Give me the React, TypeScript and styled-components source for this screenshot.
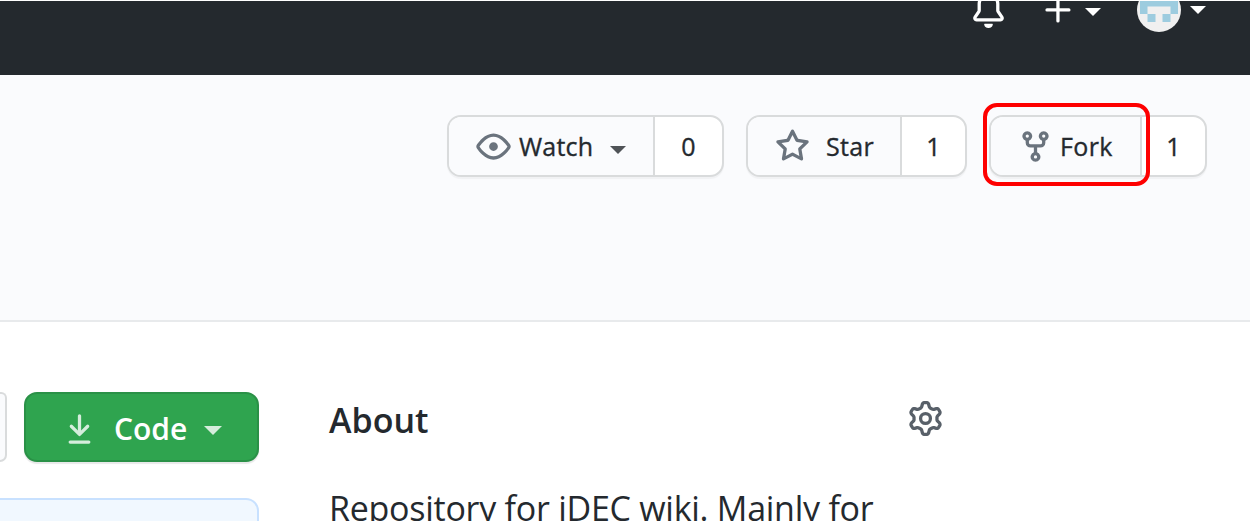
import React from "react";
import styled, { createGlobalStyle } from "styled-components";

const GlobalStyle = createGlobalStyle`
  * { box-sizing: border-box; }
  html, body { margin: 0; padding: 0; background: #fff; overflow: hidden; }
  body { font-family: "Open Sans", "Noto Sans", sans-serif; color: #24292e; }
`;

const Page = styled.div`
  width: 1250px;
  height: 521px;
  padding-top: 1px;
  overflow: hidden;
  background: #fff;
  display: flex;
  flex-direction: column;
`;

const Header = styled.header`
  height: 74px;
  flex: none;
  overflow: hidden;
  background: #24292e;
  color: #fff;
`;

const HeaderTools = styled.div`
  display: flex;
  justify-content: flex-end;
  align-items: center;
  height: 44px;
  margin-top: -13px;
  padding-right: 44px;
`;

const HeaderItem = styled.div<{ $gap: number }>`
  display: flex;
  align-items: center;
  margin-left: ${(p) => p.$gap}px;
`;

const Icon = styled.svg<{ $size?: number }>`
  display: block;
  flex: none;
  width: ${(p) => p.$size ?? 35}px;
  height: ${(p) => p.$size ?? 35}px;
  fill: currentColor;
`;

const Caret = styled.span<{ $gap: number; $half?: number; $drop?: number }>`
  flex: none;
  margin-left: ${(p) => p.$gap}px;
  margin-top: ${(p) => p.$drop ?? 0}px;
  border: ${(p) => p.$half ?? 8}px solid transparent;
  border-top: ${(p) => p.$half ?? 8}px solid currentColor;
  border-bottom: 0;
`;

const Avatar = styled.svg`
  display: block;
  width: 44px;
  height: 44px;
  border-radius: 50%;
`;

const RepoHead = styled.section`
  height: 247px;
  flex: none;
  background: #fafbfd;
  border-bottom: 2px solid #e8eaec;
  padding: 40px 43px 0 0;
  display: flex;
  justify-content: flex-end;
  align-items: flex-start;
  gap: 22px;
`;

const ButtonGroup = styled.div`
  position: relative;
  display: flex;
  height: 62px;
  border: 2px solid #d9dbdc;
  border-radius: 14px;
  background: #fff;
  box-shadow: 0 2px 1px rgba(27, 31, 35, 0.04);
`;

const Action = styled.button<{ $width: number; $pad: number }>`
  display: flex;
  align-items: center;
  width: ${(p) => p.$width}px;
  padding: 0 0 0 ${(p) => p.$pad}px;
  border: 0;
  border-right: 2px solid #d9dbdc;
  border-radius: 12px 0 0 12px;
  background: #fafbfd;
  color: #6a737d;
  font-family: inherit;
`;

const Label = styled.span<{ $gap: number; $spacing?: number }>`
  margin-left: ${(p) => p.$gap}px;
  font-size: 25px;
  font-weight: 500;
  -webkit-text-stroke: 0.35px currentColor;
  letter-spacing: ${(p) => p.$spacing ?? 0}px;
  line-height: 58px;
  color: #24292e;
`;

const DarkCaret = styled(Caret)`
  color: #4f5357;
`;

const Count = styled.span<{ $width: number }>`
  width: ${(p) => p.$width}px;
  text-align: center;
  font-size: 25px;
  font-weight: 500;
  -webkit-text-stroke: 0.35px currentColor;
  line-height: 58px;
`;

const Highlight = styled.span`
  position: absolute;
  left: -8px;
  top: -14px;
  width: 167px;
  height: 83px;
  border: 4px solid #fe0000;
  border-radius: 14px;
`;

const Content = styled.main`
  flex: 1;
  min-height: 0;
  display: flex;
`;

const FileColumn = styled.div`
  width: 259px;
  flex: none;
  padding-top: 70px;
`;

const FileNav = styled.div`
  display: flex;
  gap: 17px;
`;

const AddFile = styled.div`
  width: 7px;
  height: 70px;
  border: 2px solid #d9dbdc;
  border-left: 0;
  border-radius: 0 10px 12px 0;
  background: #fafbfd;
`;

const CodeButton = styled.button`
  display: flex;
  align-items: center;
  width: 235px;
  height: 70px;
  padding: 4px 0 0 36px;
  border: 2px solid #2a9147;
  border-radius: 13px;
  background: #2fa44f;
  box-shadow: 0 2px 1px rgba(27, 31, 35, 0.1);
  color: #d5eddc;
  font-family: inherit;
`;

const CodeLabel = styled.span`
  margin-left: 17px;
  font-size: 30px;
  font-weight: 600;
  line-height: 58px;
  color: #fff;
`;

const CommitBox = styled.div`
  height: 60px;
  margin-top: 36px;
  border: 2px solid #c8e1ff;
  border-left: 0;
  border-radius: 0 13px 0 0;
  background: #f1f8ff;
`;

const About = styled.aside`
  width: 614px;
  margin-left: 70px;
  padding-top: 72px;
`;

const AboutHead = styled.div`
  display: flex;
  align-items: center;
  justify-content: space-between;
  height: 48px;
  color: #586069;
`;

const AboutTitle = styled.h2`
  margin: 0;
  padding-top: 4px;
  font-size: 34px;
  font-weight: 600;
  line-height: 48px;
  color: #24292e;
`;

const Description = styled.p`
  margin: 42px 0 0;
  font-size: 34px;
  line-height: 48px;
  white-space: nowrap;
  letter-spacing: -0.26px;
`;

const paths = {
  bell: "M8 16a2 2 0 001.985-1.75c.017-.137-.097-.25-.235-.25h-3.5c-.138 0-.252.113-.235.25A2 2 0 008 16zM8 1.5A3.5 3.5 0 004.5 5v2.947c0 .346-.102.683-.294.97l-1.703 2.556a.018.018 0 00-.003.01l.001.006c0 .002.002.004.004.006a.017.017 0 00.006.004l.007.001h10.964l.007-.001a.016.016 0 00.006-.004.016.016 0 00.004-.006l.001-.007a.017.017 0 00-.003-.01l-1.703-2.554a1.75 1.75 0 01-.294-.97V5A3.5 3.5 0 008 1.5zM3 5a5 5 0 0110 0v2.947c0 .05.015.098.042.139l1.703 2.555A1.518 1.518 0 0113.482 13H2.518a1.518 1.518 0 01-1.263-2.36l1.703-2.554A.25.25 0 003 7.947V5z",
  plus: "M7.75 2a.75.75 0 01.75.75V7h4.25a.75.75 0 110 1.5H8.5v4.25a.75.75 0 11-1.5 0V8.5H2.75a.75.75 0 010-1.5H7V2.75A.75.75 0 017.75 2z",
  eye: "M1.679 7.932c.412-.621 1.242-1.75 2.366-2.717C5.175 4.242 6.527 3.5 8 3.5c1.473 0 2.824.742 3.955 1.715 1.124.967 1.954 2.096 2.366 2.717a.119.119 0 010 .136c-.412.621-1.242 1.75-2.366 2.717C10.825 11.758 9.473 12.5 8 12.5c-1.473 0-2.824-.742-3.955-1.715C2.92 9.818 2.09 8.69 1.679 8.068a.119.119 0 010-.136zM8 2c-1.981 0-3.67.992-4.933 2.078C1.797 5.169.88 6.423.43 7.1a1.619 1.619 0 000 1.798c.45.678 1.367 1.932 2.637 3.024C4.329 13.008 6.019 14 8 14c1.981 0 3.67-.992 4.933-2.078 1.27-1.091 2.187-2.345 2.637-3.023a1.619 1.619 0 000-1.798c-.45-.678-1.367-1.932-2.637-3.023C11.671 2.992 9.981 2 8 2zm0 8a2 2 0 100-4 2 2 0 000 4z",
  star: "M8 .25a.75.75 0 01.673.418l1.882 3.815 4.21.612a.75.75 0 01.416 1.279l-3.046 2.97.719 4.192a.75.75 0 01-1.088.791L8 12.347l-3.766 1.98a.75.75 0 01-1.088-.79l.72-4.194L.818 6.374a.75.75 0 01.416-1.28l4.21-.611L7.327.668A.75.75 0 018 .25zm0 2.445L6.615 5.5a.75.75 0 01-.564.41l-3.097.45 2.24 2.184a.75.75 0 01.216.664l-.528 3.084 2.769-1.456a.75.75 0 01.698 0l2.77 1.456-.53-3.084a.75.75 0 01.216-.664l2.24-2.183-3.096-.45a.75.75 0 01-.564-.41L8 2.694v.001z",
  fork: "M5 3.25a.75.75 0 11-1.5 0 .75.75 0 011.5 0zm0 2.122a2.25 2.25 0 10-1.5 0v.878A2.25 2.25 0 005.75 8.5h1.5v2.128a2.251 2.251 0 101.5 0V8.5h1.5a2.25 2.25 0 002.25-2.25v-.878a2.25 2.25 0 10-1.5 0v.878a.75.75 0 01-.75.75h-4.5A.75.75 0 015 6.25v-.878zm3.75 7.378a.75.75 0 11-1.5 0 .75.75 0 011.5 0zm3-8.75a.75.75 0 100-1.5.75.75 0 000 1.5z",
  download: "M7.47 10.78a.75.75 0 001.06 0l3.75-3.75a.75.75 0 00-1.06-1.06L8.75 8.44V1.75a.75.75 0 00-1.5 0v6.69L4.78 5.97a.75.75 0 00-1.06 1.06l3.75 3.75zM3.75 13a.75.75 0 000 1.5h8.5a.75.75 0 000-1.5h-8.5z",
  gear: "M7.429 1.525a6.593 6.593 0 011.142 0c.036.003.108.036.137.146l.289 1.105c.147.56.55.967.997 1.189.174.086.341.183.501.29.417.278.97.423 1.53.27l1.102-.303c.11-.03.175.016.195.046.219.31.41.641.573.989.014.031.022.11-.059.19l-.815.806c-.411.406-.562.957-.53 1.456a4.588 4.588 0 010 .582c-.032.499.119 1.05.53 1.456l.815.806c.08.08.073.159.059.19a6.494 6.494 0 01-.573.99c-.02.029-.086.074-.195.045l-1.103-.303c-.559-.153-1.112-.008-1.529.27-.16.107-.327.204-.5.29-.449.222-.851.628-.998 1.189l-.289 1.105c-.029.11-.101.143-.137.146a6.613 6.613 0 01-1.142 0c-.036-.003-.108-.037-.137-.146l-.289-1.105c-.147-.56-.55-.967-.997-1.189a4.502 4.502 0 01-.501-.29c-.417-.278-.97-.423-1.53-.27l-1.102.303c-.11.03-.175-.016-.195-.046a6.492 6.492 0 01-.573-.989c-.014-.031-.022-.11.059-.19l.815-.806c.411-.406.562-.957.53-1.456a4.587 4.587 0 010-.582c.032-.499-.119-1.05-.53-1.456l-.815-.806c-.08-.08-.073-.159-.059-.19a6.44 6.44 0 01.573-.99c.02-.029.086-.075.195-.045l1.103.303c.559.153 1.112.008 1.529-.27.16-.107.327-.204.5-.29.449-.222.851-.628.998-1.189l.289-1.105c.029-.11.101-.143.137-.146zM8 0c-.236 0-.47.01-.701.03-.743.065-1.29.615-1.458 1.261l-.29 1.106c-.017.066-.078.158-.211.224a5.994 5.994 0 00-.668.386c-.123.082-.233.09-.3.071L3.27 2.776c-.644-.177-1.392.02-1.82.63a7.977 7.977 0 00-.704 1.217c-.315.675-.111 1.422.363 1.891l.815.806c.05.048.098.147.088.294a6.084 6.084 0 000 .772c.01.147-.038.246-.088.294l-.815.806c-.474.469-.678 1.216-.363 1.891.2.428.436.835.704 1.218.428.609 1.176.806 1.82.63l1.103-.303c.066-.019.176-.011.299.071.213.143.436.272.668.386.133.066.194.158.212.224l.289 1.106c.169.646.715 1.196 1.458 1.26a8.094 8.094 0 001.402 0c.743-.064 1.29-.614 1.458-1.26l.29-1.106c.017-.066.078-.158.211-.224a5.98 5.98 0 00.668-.386c.123-.082.233-.09.3-.071l1.102.302c.644.177 1.392-.02 1.82-.63.268-.382.505-.789.704-1.217.315-.675.111-1.422-.364-1.891l-.814-.806c-.05-.048-.098-.147-.088-.294a6.1 6.1 0 000-.772c-.01-.147.039-.246.088-.294l.814-.806c.475-.469.679-1.216.364-1.891a7.992 7.992 0 00-.704-1.218c-.428-.609-1.176-.806-1.82-.63l-1.103.303c-.066.019-.176.011-.299-.071a5.991 5.991 0 00-.668-.386c-.133-.066-.194-.158-.212-.224L10.16 1.29C9.99.645 9.444.095 8.701.031A8.094 8.094 0 008 0zm1.5 8a1.5 1.5 0 11-3 0 1.5 1.5 0 013 0zM11 8a3 3 0 11-6 0 3 3 0 016 0z",
};

const Octicon = ({ name }: { name: keyof typeof paths }) => (
  <Icon viewBox="0 0 16 16" aria-hidden="true">
    <path fillRule="evenodd" d={paths[name]} />
  </Icon>
);

export default function App() {
  return (
    <>
      <GlobalStyle />
      <Page>
        <Header>
          <HeaderTools>
            <HeaderItem $gap={0}>
              <Octicon name="bell" />
            </HeaderItem>
            <HeaderItem $gap={35}>
              <Octicon name="plus" />
              <Caret $gap={9} $drop={4} />
            </HeaderItem>
            <HeaderItem $gap={36}>
              <Avatar viewBox="0 0 44 44" aria-hidden="true">
                <rect width="44" height="44" fill="#f0f0f0" />
                <path
                  fill="#9dccdf"
                  d="M3 6H41V26H33.5V34H25.5V26H33.5V18.5H10.5V26H18.5V34H10.5V26H3Z"
                />
              </Avatar>
              <Caret $gap={9} />
            </HeaderItem>
          </HeaderTools>
        </Header>

        <RepoHead>
          <ButtonGroup>
            <Action $width={206} $pad={27}>
              <Octicon name="eye" />
              <Label $gap={8} $spacing={0.2}>Watch</Label>
              <DarkCaret $gap={17} $drop={8} />
            </Action>
            <Count $width={67}>0</Count>
          </ButtonGroup>
          <ButtonGroup>
            <Action $width={154} $pad={27}>
              <Octicon name="star" />
              <Label $gap={16} $spacing={0.3}>Star</Label>
            </Action>
            <Count $width={63}>1</Count>
          </ButtonGroup>
          <ButtonGroup>
            <Action $width={151} $pad={27}>
              <Octicon name="fork" />
              <Label $gap={7} $spacing={0.4}>Fork</Label>
            </Action>
            <Count $width={63}>1</Count>
            <Highlight />
          </ButtonGroup>
        </RepoHead>

        <Content>
          <FileColumn>
            <FileNav>
              <AddFile />
              <CodeButton>
                <Octicon name="download" />
                <CodeLabel>Code</CodeLabel>
                <Caret $gap={17} $half={9} $drop={3} />
              </CodeButton>
            </FileNav>
            <CommitBox />
          </FileColumn>
          <About>
            <AboutHead>
              <AboutTitle>About</AboutTitle>
              <Octicon name="gear" />
            </AboutHead>
            <Description>Repository for iDEC wiki. Mainly for</Description>
          </About>
        </Content>
      </Page>
    </>
  );
}
